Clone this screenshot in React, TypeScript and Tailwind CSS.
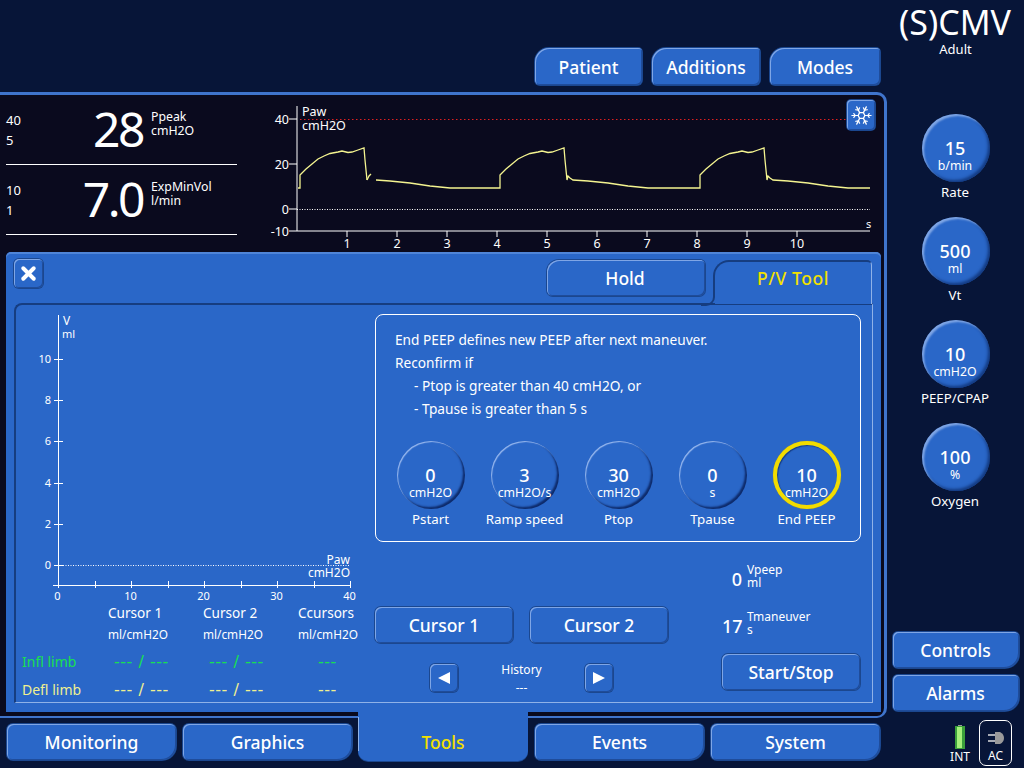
import { Snowflake, X } from "lucide-react";

const FONT = "font-['Noto_Sans','Open_Sans',sans-serif]";
const BEVEL =
  "shadow-[inset_1px_1px_0_#7fa6e6,inset_-1px_-1px_0_#1f4c9a,0_0_0_1px_#1b478f]";

function TopTab({ label, w }: { label: string; w: string }) {
  return (
    <div
      className={`${w} h-[37px] pt-px bg-[#2a67c8] rounded-tl-[14px] rounded-tr-[4px] rounded-b-[5px] ${BEVEL} flex items-center justify-center text-white text-[17.5px] font-medium`}
    >
      {label}
    </div>
  );
}

function SideButton({ label }: { label: string }) {
  return (
    <div
      className={`w-[126px] h-[36px] bg-[#2a67c8] rounded-tl-[5px] rounded-tr-[5px] rounded-bl-[5px] rounded-br-[14px] ${BEVEL} flex items-center justify-center text-white text-[17.5px] font-medium`}
    >
      {label}
    </div>
  );
}

function NavTab({ label }: { label: string }) {
  return (
    <div
      className={`w-[169px] h-[36px] pt-px shrink-0 bg-[#2a67c8] rounded-t-[6px] rounded-bl-[6px] rounded-br-[14px] ${BEVEL} flex items-center justify-center text-white text-[17.5px] font-medium`}
    >
      {label}
    </div>
  );
}

function Knob({
  value,
  unit,
  label,
  active,
  side,
}: {
  value: string;
  unit: string;
  label: string;
  active?: boolean;
  side?: boolean;
}) {
  const ring = active
    ? "border-[4px] border-[#f2dc00] pt-[20px] shadow-[inset_1px_1px_1px_rgba(0,20,70,.5),0_0_1px_#a89a20]"
    : side
      ? "pt-[24px] shadow-[inset_2px_2px_2px_rgba(200,220,255,.55),inset_-2px_-2px_3px_rgba(10,40,100,.7)]"
      : "pt-[24px] shadow-[inset_1px_1px_1px_rgba(200,220,255,.7),inset_-2px_-2px_2px_rgba(8,32,90,.85)]";
  return (
    <div className="flex flex-col items-center w-[94px] shrink-0">
      <div className={`w-[68px] h-[68px] rounded-full bg-[#2a67c8] ${ring} flex flex-col items-center text-white`}>
        <div className="text-[18px] leading-[20px] font-medium -ml-px">{value}</div>
        <div className="text-[12.3px] leading-[15px] -ml-px">{unit}</div>
      </div>
      <div className="text-[13.3px] leading-[18px] mt-[1px] text-white whitespace-nowrap -ml-px">{label}</div>
    </div>
  );
}

function Numeric({
  hi,
  lo,
  value,
  name,
  unit,
}: {
  hi: string;
  lo: string;
  value: string;
  name: string;
  unit: string;
}) {
  return (
    <div className="h-[70px] w-[231px] border-b border-white flex text-white">
      <div className="w-[40px] pt-[15px] text-[13px] leading-[20px]">
        <div>{hi}</div>
        <div>{lo}</div>
      </div>
      <div className="w-[99px] pt-[6px] text-right text-[48px] leading-[56px] tracking-[-2.5px] pr-[2px]">{value}</div>
      <div className="pl-[6px] pt-[15px] text-[12.3px] leading-[14px]">
        <div>{name}</div>
        <div>{unit}</div>
      </div>
    </div>
  );
}

const CYCLE: [number, number][] = [
  [2, 188], [2, 175], [3, 174], [8, 169], [14, 164], [20, 159], [26, 156], [32, 153.5], [40, 152], [44, 151],
  [50, 152.5], [54, 152], [60, 150], [66, 148], [67, 160], [68, 170], [69, 180], [70, 176], [72, 178], [75, 180],
  [90, 181], [110, 183], [130, 186], [150, 188], [199, 188],
];

function wave(offset: number, max = 999) {
  return CYCLE.filter(([x]) => x + offset <= max)
    .map(([x, y]) => `${x + offset},${y}`)
    .join(" ");
}

function PawChart() {
  const ticks = [1, 2, 3, 4, 5, 6, 7, 8, 9, 10];
  return (
    <svg width={614} height={157} viewBox="270 95 614 157" className="block">
      <g fill="#ffffff" fontSize="12.5" fontFamily="'Noto Sans', sans-serif">
        <text x={302} y={116}>Paw</text>
        <text x={302} y={130}>cmH2O</text>
        <text x={866} y={228} fontSize="11">s</text>
        {[["40", 119], ["20", 164], ["0", 209], ["-10", 231]].map(([t, y]) => (
          <text key={t} x={289} y={Number(y) + 4.5} textAnchor="end">{t}</text>
        ))}
        {ticks.map((t) => (
          <text key={t} x={297 + t * 50} y={248} textAnchor="middle">{t}</text>
        ))}
      </g>
      <path d="M297 106V231H870" stroke="#fff" fill="none" />
      <path d="M289 119H297M289 164H297M289 209H297M289 231H297" stroke="#fff" />
      {ticks.map((t) => (
        <path key={t} d={`M${297 + t * 50} 231v6`} stroke="#fff" />
      ))}
      <path d="M300 119.5H847" stroke="#e02020" strokeDasharray="1.5 2.5" />
      <path d="M297 209.5H870" stroke="#fff" strokeDasharray="1 1.5" />
      <g fill="none" stroke="#f4f490" strokeWidth="1.3">
        <polyline points={`298,188 ${wave(298, 367)}`} />
        <polyline points="367,180 369,176 371,174" />
        <polyline points={`376,180 390,181 410,183 430,186 450,188 498,188 ${wave(498)}`} />
        <polyline points={`697,188 ${wave(698, 870)} 870,188`} />
      </g>
    </svg>
  );
}

function PvChart() {
  const yLabels: [string, number][] = [["10", 359], ["8", 400], ["6", 441], ["4", 483], ["2", 524], ["0", 565]];
  const xTicks = [0, 1, 2, 3, 4, 5, 6, 7, 8];
  return (
    <svg width={350} height={300} viewBox="15 305 350 300" className="block shrink-0">
      <g fill="#fff" fontSize="11" fontFamily="'Noto Sans', sans-serif">
        <text x={62} y={325} fontSize="12">V</text>
        <text x={61} y={338}>ml</text>
        {yLabels.map(([t, y]) => (
          <text key={t} x={50} y={y + 4} textAnchor="end">{t}</text>
        ))}
        {["0", "10", "20", "30", "40"].map((t, i) => (
          <text key={t} x={56.5 + i * 73} y={600} textAnchor="middle">{t}</text>
        ))}
        <text x={349} y={564} textAnchor="end" fontSize="12">Paw</text>
        <text x={349} y={577} textAnchor="end" fontSize="12">cmH2O</text>
      </g>
      <path d="M57.5 315V586M52 585.5H349" stroke="#fff" fill="none" />
      {yLabels.map(([t, y]) => (
        <path key={t} d={`M53 ${y + 0.5}h9`} stroke="#fff" />
      ))}
      {xTicks.map((t) => (
        <path key={t} d={`M${Math.round(57 + t * 36.5) + 0.5} 581v7`} stroke="#fff" />
      ))}
      <path d="M57 565.5H349" stroke="#fff" strokeDasharray="1 1.5" />
    </svg>
  );
}

function ArrowButton({ dir }: { dir: "l" | "r" }) {
  return (
    <div className={`w-[28px] h-[28px] bg-[#2a67c8] rounded-[5px] ${BEVEL} flex items-center justify-center`}>
      <svg width="14" height="14" viewBox="0 0 14 14">
        <path d={dir === "l" ? "M13 1V13L1 7Z" : "M1 1V13L13 7Z"} fill="#fff" />
      </svg>
    </div>
  );
}

function WideButton({ label }: { label: string }) {
  return (
    <div
      className={`w-[138px] h-[36px] bg-[#2a67c8] rounded-[6px] ${BEVEL} flex items-center justify-center text-white text-[17.5px] font-medium`}
    >
      {label}
    </div>
  );
}

function Measure({ value, name, unit }: { value: string; name: string; unit: string }) {
  return (
    <div className="flex text-white h-[30px]">
      <div className="w-[20px] text-right text-[18px] leading-[24px] font-medium pt-[4px]">{value}</div>
      <div className="pl-[5px] text-[12px] leading-[13px]">
        <div>{name}</div>
        <div>{unit}</div>
      </div>
    </div>
  );
}

const HEAD = "text-[13.6px] leading-[24px] whitespace-nowrap pt-px";
const UNIT = "text-[11.8px] leading-[20px] whitespace-nowrap";
const DASH = "font-['DejaVu_Sans',sans-serif] text-[16px] leading-[28px] whitespace-nowrap tracking-[0.5px]";

function LimbTable() {
  const rows = [
    { name: "Infl limb", cls: "text-[#18e050]" },
    { name: "Defl limb", cls: "text-[#f0f090]" },
  ];
  return (
    <div className="grid grid-cols-[86px_95px_95px_95px] grid-rows-[24px_24px_28px_28px] text-white ml-[6px] -mt-[5px]">
      <div />
      <div className={HEAD}>Cursor 1</div>
      <div className={HEAD}>Cursor 2</div>
      <div className={HEAD}>Ccursors</div>
      <div />
      <div className={UNIT}>ml/cmH2O</div>
      <div className={UNIT}>ml/cmH2O</div>
      <div className={UNIT}>ml/cmH2O</div>
      {rows.map((r) => (
        <div key={r.name} className="contents">
          <div className={`text-[14px] leading-[28px] whitespace-nowrap ${r.cls}`}>{r.name}</div>
          <div className={`${DASH} ${r.cls} pl-[6px]`}>--- / ---</div>
          <div className={`${DASH} ${r.cls} pl-[6px]`}>--- / ---</div>
          <div className={`${DASH} ${r.cls} pl-[20px]`}>---</div>
        </div>
      ))}
    </div>
  );
}

const INFO = "text-[13.7px] leading-[23px] whitespace-nowrap";

function RightPane() {
  return (
    <div className="flex flex-col w-[486px] ml-[10px] pt-[9px]">
      <div className="h-[228px] border border-white rounded-[8px] px-[19px] pt-[13px] text-white">
        <div className={INFO}>End PEEP defines new PEEP after next maneuver.</div>
        <div className={INFO}>Reconfirm if</div>
        <div className={`${INFO} pl-[19px]`}>- Ptop is greater than 40 cmH2O, or</div>
        <div className={`${INFO} pl-[19px]`}>- Tpause is greater than 5 s</div>
        <div className="flex mt-[21px] -ml-[11px]">
          <Knob value="0" unit="cmH2O" label="Pstart" />
          <Knob value="3" unit="cmH2O/s" label="Ramp speed" />
          <Knob value="30" unit="cmH2O" label="Ptop" />
          <Knob value="0" unit="s" label="Tpause" />
          <Knob value="10" unit="cmH2O" label="End PEEP" active />
        </div>
      </div>
      <div className="flex mt-[21px]">
        <div className="w-[293px] pt-[44px]">
          <div className="flex justify-between">
            <WideButton label="Cursor 1" />
            <WideButton label="Cursor 2" />
          </div>
          <div className="flex items-center mt-[16px] pl-[55px]">
            <ArrowButton dir="l" />
            <div className="w-[127px] text-center text-white text-[12px] leading-[18px] mt-[2px]">
              <div>History</div>
              <div>---</div>
            </div>
            <ArrowButton dir="r" />
          </div>
        </div>
        <div className="ml-[54px] w-[139px] flex flex-col">
          <Measure value="0" name="Vpeep" unit="ml" />
          <div className="mt-[17px]">
            <Measure value="17" name="Tmaneuver" unit="s" />
          </div>
          <div className="mt-[14px]">
            <WideButton label="Start/Stop" />
          </div>
        </div>
      </div>
    </div>
  );
}

function Panel() {
  return (
    <div className="ml-[6px] w-[875px] h-[460px] shrink-0 bg-[#2a67c8] rounded-t-[5px] shadow-[inset_0_2px_0_#4f85d8] px-[8px] pt-[7px] flex flex-col">
      <div className="flex h-[44px] relative z-10 shrink-0">
        <div className={`w-[29px] h-[29px] bg-[#2a67c8] rounded-[5px] ${BEVEL} flex items-center justify-center`}>
          <X size={21} color="#fff" strokeWidth={4.5} />
        </div>
        <div className={`ml-[504px] mt-[1px] w-[158px] h-[36px] pr-[2px] bg-[#2a67c8] rounded-tl-[12px] rounded-tr-[5px] rounded-b-[6px] ${BEVEL} flex items-center justify-center text-white text-[17.5px] font-medium`}>
          Hold
        </div>
        <div className="ml-[8px] mt-[1px] w-[159px] h-[44px] relative">
          <div className="h-[34px] bg-[#2a67c8] rounded-tl-[16px] rounded-tr-[5px] border-t-2 border-l-2 border-[#163d80] border-r border-r-[#8fb2e8] flex items-start justify-center pt-[3px] text-[#f2e000] text-[17.5px] tracking-[0.6px] font-medium">
            P/V Tool
          </div>
          <div className="absolute left-[2px] right-0 top-[34px] bottom-0 bg-[#2a67c8] border-r border-[#8fb2e8]" />
          <div className="absolute -left-[12px] top-[28px] w-[14px] h-[18px] border-r-2 border-b-2 border-[#163d80] rounded-br-[9px]" />
        </div>
      </div>
      <div className="h-[400px] w-[859px] shrink-0 border-t-2 border-l-2 border-[#163d80] border-b border-b-[#8fb2e8] border-r border-r-[#8fb2e8] rounded-tl-[8px] flex">
        <div className="w-[349px] shrink-0 flex flex-col">
          <PvChart />
          <LimbTable />
        </div>
        <RightPane />
      </div>
    </div>
  );
}

export default function App() {
  return (
    <div className={`w-[1024px] h-[768px] bg-[#071538] flex overflow-hidden ${FONT}`}>
      <div className="w-[887px] flex flex-col shrink-0">
        <div className="h-[92px] shrink-0 flex justify-end items-start pt-[48px] pr-[7px] gap-[10px]">
          <TopTab label="Patient" w="w-[107px]" />
          <TopTab label="Additions" w="w-[108px]" />
          <TopTab label="Modes" w="w-[110px]" />
        </div>
        <div className="h-[626px] shrink-0 bg-[#0a0a1e] border-t-[3px] border-r-[3px] border-b-2 border-[#3f74cc] rounded-tr-[10px] rounded-br-[10px] flex flex-col">
          <div className="h-[157px] shrink-0 flex relative">
            <div className="pl-[6px] w-[270px] shrink-0">
              <Numeric hi="40" lo="5" value="28" name="Ppeak" unit="cmH2O" />
              <Numeric hi="10" lo="1" value="7.0" name="ExpMinVol" unit="l/min" />
            </div>
            <PawChart />
            <div className={`absolute left-[847px] top-[5px] w-[28px] h-[30px] bg-[#2a67c8] rounded-[4px] ${BEVEL} flex items-center justify-center`}>
              <Snowflake size={23} color="#fff" strokeWidth={1.3} />
            </div>
          </div>
          <Panel />
        </div>
        <div className="flex pl-[7px] gap-[7px] mt-[6px] relative">
          <NavTab label="Monitoring" />
          <NavTab label="Graphics" />
          <div className="w-[170px] h-[58px] -mt-[21px] -ml-px shrink-0 relative z-10 bg-[#2a67c8] rounded-b-[10px] flex items-end justify-center pb-[6px] text-[#f2e000] text-[17.5px] font-medium shadow-[0_1px_0_#1b478f]">
            Tools
            <div className="absolute left-0 top-[14px] bottom-[10px] border-l border-[#8fb2e8]" />
          </div>
          <NavTab label="Events" />
          <NavTab label="System" />
        </div>
      </div>
      <div className="w-[137px] shrink-0 flex flex-col items-center text-white relative">
        <div className="text-[34px] leading-[34px] mt-[5px] -ml-[1px] whitespace-nowrap">(S)CMV</div>
        <div className="text-[13px] leading-[18px] mt-[1px]">Adult</div>
        <div className="flex flex-col mt-[56px] gap-[16px]">
          <Knob value="15" unit="b/min" label="Rate" side />
          <Knob value="500" unit="ml" label="Vt" side />
          <Knob value="10" unit="cmH2O" label="PEEP/CPAP" side />
          <Knob value="100" unit="%" label="Oxygen" side />
        </div>
        <div className="mt-[122px] flex flex-col gap-[7px]">
          <SideButton label="Controls" />
          <SideButton label="Alarms" />
        </div>
        <div className="flex mt-[9px] self-start pl-[60px] items-end">
          <div className="flex flex-col items-center w-[26px] mb-[1px]">
            <svg width="10" height="24" viewBox="0 0 10 24">
              <rect x="3" y="0" width="4" height="2" fill="#9a9a9a" />
              <rect x="0" y="1" width="10" height="23" fill="#3aa03a" />
              <rect x="2" y="2" width="5" height="21" fill="#a4f07a" />
            </svg>
            <div className="text-[12px] leading-[16px]">INT</div>
          </div>
          <div className="ml-[6px] w-[33px] h-[46px] border border-white rounded-[7px] flex flex-col items-center justify-end">
            <svg width="16" height="14" viewBox="0 0 16 14" className="mb-[3px]">
              <path d="M7 1H12Q16 3 16 7T12 13H7Z" fill="#9a9a9a" />
              <path d="M0 4H7M0 10H7" stroke="#ddd" strokeWidth="1.5" />
            </svg>
            <div className="text-[12px] leading-[16px] mb-[1px]">AC</div>
          </div>
        </div>
      </div>
    </div>
  );
}
